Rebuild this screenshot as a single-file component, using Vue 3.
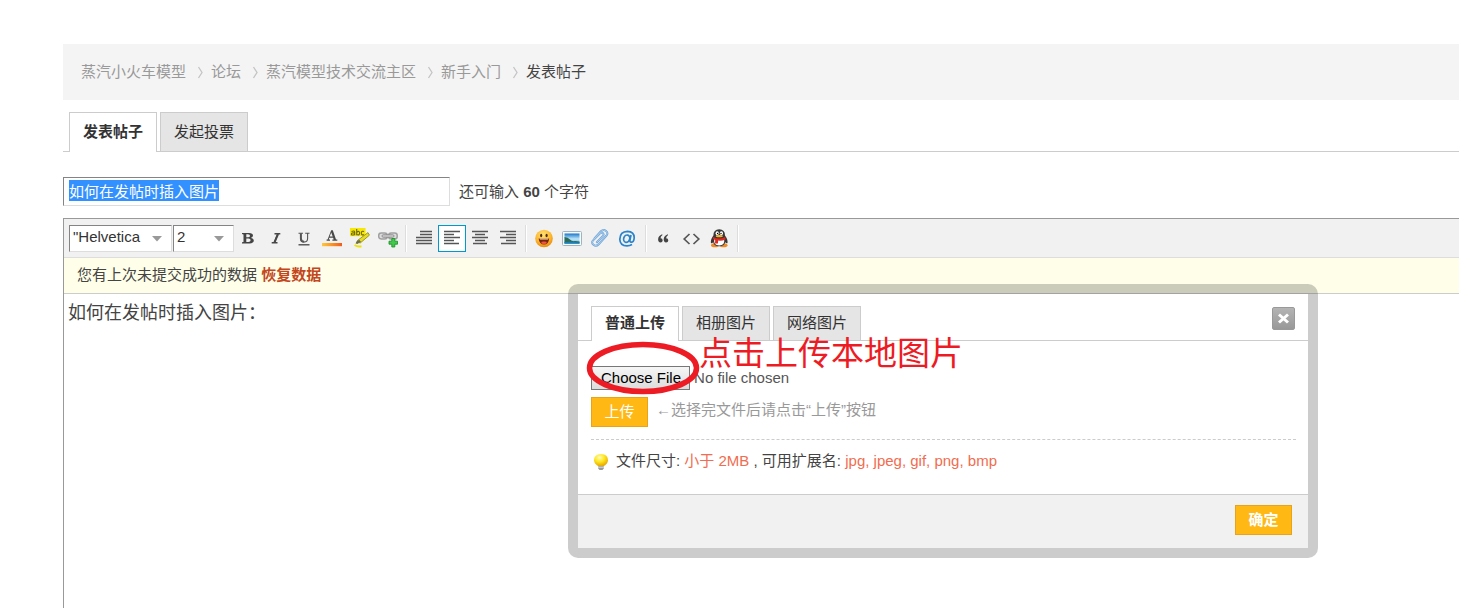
<script setup>
import { ref, onMounted } from 'vue'

const crumbs = ['蒸汽小火车模型', '论坛', '蒸汽模型技术交流主区', '新手入门']
const title = ref('如何在发帖时插入图片')
const body = ref('如何在发帖时插入图片：')
const titleBox = ref(null)
const dialogTabs = ['普通上传', '相册图片', '网络图片']

onMounted(() => {
  titleBox.value.focus()
  titleBox.value.select()
})
</script>

<template>
  <div class="page">
    <nav class="crumbs" aria-label="导航">
      <template v-for="c in crumbs" :key="c">
        <a href="#">{{ c }}</a>
        <svg class="chev" width="25" height="16" viewBox="0 0 25 16" aria-hidden="true">
          <path d="M12.5 3 L16 8.5 L12.5 14" fill="none" stroke="#c4c4c4" stroke-width="1.3" />
        </svg>
      </template>
      <a href="#" class="here">发表帖子</a>
    </nav>

    <div class="tabs">
      <button type="button" class="tab on">发表帖子</button>
      <button type="button" class="tab">发起投票</button>
    </div>

    <div class="title-row">
      <input ref="titleBox" v-model="title" class="title" type="text" aria-label="标题" />
      <span>还可输入 <b>60</b> 个字符</span>
    </div>

    <section class="editor">
      <div class="toolbar">
        <label class="pick font">
          <select aria-label="字体"><option>"Helvetica</option></select>
          <svg width="10" height="6" viewBox="0 0 10 6"><path d="M0 0H10L5 5.5Z" fill="#999" /></svg>
        </label>
        <label class="pick size">
          <select aria-label="字号"><option>2</option></select>
          <svg width="10" height="6" viewBox="0 0 10 6"><path d="M0 0H10L5 5.5Z" fill="#999" /></svg>
        </label>

        <div class="group">
          <button type="button" class="tool" aria-label="粗体">
            <svg viewBox="0 0 20 20"><path d="M4 5H11Q15 5 15 7.6Q15 9.4 12.8 9.9Q15.8 10.4 15.8 12.6Q15.8 15.4 11.6 15.4H4V14.3L5.5 14V6.4L4 6.1ZM8.3 6.3V9.3H10Q12 9.3 12 7.8T10 6.3ZM8.3 10.6V14.1H10.4Q12.6 14.1 12.6 12.3T10.4 10.6Z" fill="#444" fill-rule="evenodd" /></svg>
          </button>
          <button type="button" class="tool" aria-label="斜体">
            <svg viewBox="0 0 20 20"><path d="M8.5 5.7H14.3M5.7 14.8H11.5M12 5.7L8.2 14.8" stroke="#484848" stroke-width="1.4" fill="none" /><path d="M12 6L8.4 14.6" stroke="#484848" stroke-width="2" /></svg>
          </button>
          <button type="button" class="tool" aria-label="下划线">
            <svg viewBox="0 0 20 20"><path d="M4.5 5.2H9M11.2 5.2H15.5M13.6 5.2V10.6Q13.6 14 10.2 14T6.8 10.6" stroke="#555" stroke-width="1.1" fill="none" /><path d="M6.9 5.2V10.5Q6.9 13.8 10.2 13.8" stroke="#555" stroke-width="2" fill="none" /><path d="M4.5 16.8H15.5" stroke="#444" stroke-width="1.3" /></svg>
          </button>
          <button type="button" class="tool" aria-label="文字颜色">
            <svg viewBox="0 0 20 20">
              <defs><linearGradient id="ink"><stop offset="0" stop-color="#ffc83c" /><stop offset=".5" stop-color="#fa9325" /><stop offset="1" stop-color="#f05a1c" /></linearGradient></defs>
              <path d="M9.200 2.200H10.800L14 11.600H15.300V12.700H10.400V11.600H11.700L11.100 9.700H7.300L6.700 11.600H8V12.700H4.600V11.600H5.600ZM9.200 4.400L7.700 8.500H10.700Z" fill="#484848" fill-rule="evenodd" />
              <rect y="15" width="20" height="3.2" fill="url(#ink)" />
            </svg>
          </button>
          <button type="button" class="tool" aria-label="背景色">
            <svg viewBox="0 0 20 20">
              <rect x="0" y="0" width="15.5" height="8.2" fill="#f7e800" />
              <g fill="none" stroke="#6b6420" stroke-width="1.1"><path d="M1.5 3.5Q4.7 2.3 4.7 4V7.3M4.7 5Q1.4 4.6 1.4 6.2T4.7 6.4" /><path d="M6.7 1V7.2M6.7 4.2Q9.6 2.3 9.6 5T6.7 6.6" /><path d="M14 3.6Q11.3 2.5 11.3 5T14 6.7" /></g>
              <path d="M18 4.6L19.4 7.2L10 15.2L7.3 12.6Z" fill="#e6dc22" stroke="#8c8510" stroke-width=".8" />
              <path d="M9.2 11.8L11 13.8L7.4 16L5.6 15.6L6.4 13.4Z" fill="#6f6f45" />
              <path d="M4.600 17Q7.500 19 11.500 18.200" stroke="#eee200" stroke-width="2" fill="none" />
            </svg>
          </button>
          <button type="button" class="tool" aria-label="链接">
            <svg viewBox="0 0 20 20">
              <g fill="none" stroke="#a0a0a0" stroke-width="1.5"><rect x=".7" y="5" width="8.500" height="6" rx="2.500" fill="#ddd" /><rect x="10.700" y="5" width="8.500" height="6" rx="2.500" fill="#ddd" /></g>
              <rect x="4" y="6.700" width="12" height="2.600" rx="1.200" fill="#c8c8c8" stroke="#888" stroke-width=".8" />
              <path d="M13.800 10.500H16.800V13.200H19.500V16.200H16.800V19H13.800V16.200H11V13.200H13.800Z" fill="#42c94b" stroke="#168b25" stroke-width=".8" />
            </svg>
          </button>
        </div>

        <i class="sep"></i>
        <div class="group">
          <button type="button" class="tool" aria-label="自动排版">
            <svg viewBox="0 0 20 20"><path d="M6 3.500H18M6 6.500H18M2 9.500H18M2 12.500H18M2 15.500H18" stroke="#555" stroke-width="1.700" /></svg>
          </button>
          <button type="button" class="tool active" aria-label="居左">
            <svg viewBox="0 0 20 20"><path d="M2 3.500H18M2 6.500H12M2 9.500H18M2 12.500H12M2 15.500H17" stroke="#555" stroke-width="1.700" /></svg>
          </button>
          <button type="button" class="tool" aria-label="居中">
            <svg viewBox="0 0 20 20"><path d="M2 3.500H18M5 6.500H15M2 9.500H18M5 12.500H15M3 15.500H17" stroke="#555" stroke-width="1.700" /></svg>
          </button>
          <button type="button" class="tool" aria-label="居右">
            <svg viewBox="0 0 20 20"><path d="M2 3.500H18M8 6.500H18M2 9.500H18M8 12.500H18M3 15.500H18" stroke="#555" stroke-width="1.700" /></svg>
          </button>
        </div>

        <i class="sep"></i>
        <div class="group">
          <button type="button" class="tool" aria-label="表情">
            <svg viewBox="0 0 20 20">
              <defs><radialGradient id="face" cx=".45" cy=".3" r=".7"><stop offset="0" stop-color="#ffe277" /><stop offset=".65" stop-color="#fcb62c" /><stop offset="1" stop-color="#e88a12" /></radialGradient></defs>
              <circle cx="10" cy="10.500" r="8.800" fill="url(#face)" />
              <ellipse cx="7.200" cy="7.500" rx="1.100" ry="1.700" fill="#4b2a10" /><ellipse cx="12.600" cy="7.500" rx="1.100" ry="1.700" fill="#4b2a10" />
              <path d="M4.600 10.500H15.200Q14.600 16.500 10 16.500T4.600 10.500Z" fill="#7a2410" /><path d="M5.500 10.600H14.400L14 11.600H6Z" fill="#ffe9b0" /><ellipse cx="10" cy="14.700" rx="2.800" ry="1.300" fill="#ef5540" />
            </svg>
          </button>
          <button type="button" class="tool" aria-label="图片">
            <svg viewBox="0 0 20 20">
              <defs><linearGradient id="sky" x2="0" y2="1"><stop offset="0" stop-color="#1976c9" /><stop offset=".55" stop-color="#bfe6fa" /><stop offset="1" stop-color="#5db2e2" /></linearGradient></defs>
              <rect x=".5" y="3.500" width="19" height="14" rx="1" fill="#f7fafc" stroke="#9fb4bf" />
              <rect x="2.500" y="5.500" width="15" height="10" fill="url(#sky)" /><path d="M2.500 9Q6 9.200 8 11.500T13 13.100L17.500 13.500V15.500H2.500Z" fill="#2c6b56" /><path d="M2.500 14.100Q10 13 17.500 14.500V15.500H2.500Z" fill="#1680c5" />
            </svg>
          </button>
          <button type="button" class="tool" aria-label="附件">
            <svg viewBox="0 0 20 20"><g fill="none" stroke-linecap="round"><path d="M4.500 10.500L10.900 3.300Q13.500 .9 16 3T16.500 7.500L8.700 16.300Q6.100 19 3.500 16.800T3.100 12.400L10.100 5.200Q12 4 13.100 5.300T12.900 7.900L6.900 14.200" stroke="#6fa3d6" stroke-width="2" /><path d="M4.500 10.500L10.900 3.300Q13.500 .9 16 3T16.500 7.500L8.700 16.300Q6.100 19 3.500 16.800T3.100 12.400L10.100 5.200Q12 4 13.100 5.300T12.900 7.900L6.900 14.200" stroke="#b6d7f3" stroke-width=".8" /></g></svg>
          </button>
          <button type="button" class="tool" aria-label="@朋友">
            <svg viewBox="0 0 20 20"><g fill="none" stroke="#2a83cb" stroke-width="1.700"><path d="M14 16.500Q11.800 17.800 9 17.800Q2 17.800 1.800 11.200Q2 3.500 9.500 3.300Q16.200 3.500 16.200 9.700Q16 14.100 13.200 14.200Q11.500 14 12 11.800L13 7" /><ellipse cx="8.700" cy="10.700" rx="3" ry="3.700" transform="rotate(18 8.700 10.700)" /></g></svg>
          </button>
        </div>

        <i class="sep"></i>
        <div class="group">
          <button type="button" class="tool" aria-label="引用">
            <svg viewBox="0 0 20 20"><path d="M8.500 7Q6.500 8.200 6.500 10.200Q8.700 10.200 8.700 12.400Q8.500 14.500 6.500 14.500Q4 14.300 4.100 11.200Q4.300 7.900 8.100 6.300ZM14.100 7Q12.100 8.200 12.100 10.200Q14.300 10.200 14.300 12.400Q14.100 14.500 12.100 14.500Q9.600 14.300 9.700 11.200Q9.900 7.900 13.700 6.300Z" fill="#444" /></svg>
          </button>
          <button type="button" class="tool" aria-label="代码">
            <svg viewBox="0 0 20 20"><path d="M7.500 6L2.200 11L7.500 16M11.500 6L16.800 11L11.500 16" fill="none" stroke="#555" stroke-width="1.700" /></svg>
          </button>
          <button type="button" class="tool" aria-label="QQ">
            <svg viewBox="0 0 20 20">
              <ellipse cx="5" cy="17.300" rx="4" ry="2" fill="#f08a24" /><ellipse cx="13.500" cy="17.300" rx="4" ry="2" fill="#f08a24" />
              <path d="M9.200 1.200Q15 1.400 15 7.500Q18 11.500 17.500 14.900Q16.700 15.700 15.200 14.200Q14.400 18.200 9.200 18.200T3.200 14.200Q1.700 15.700 .9 14.900Q.4 11.500 3.400 7.500Q3.400 1.400 9.200 1.200Z" fill="#383838" />
              <path d="M4.200 11H14.200Q15 17.500 9.200 17.500T4.200 11Z" fill="#fff" />
              <ellipse cx="7.200" cy="5.200" rx="1.600" ry="2" fill="#fff" /><ellipse cx="11.400" cy="5.200" rx="1.600" ry="2" fill="#fff" /><circle cx="7.600" cy="5.500" r=".7" /><circle cx="11" cy="5.500" r=".7" />
              <ellipse cx="9.300" cy="8.200" rx="3.500" ry="1.100" fill="#f7b52b" />
              <path d="M3.200 9Q9.200 12 15.200 9L15.500 11.500Q12 13 8.200 12.600L7.900 15.500H5L5.200 12.100L2.900 11Z" fill="#e3281f" />
            </svg>
          </button>
        </div>
        <i class="sep"></i>
      </div>

      <div class="notice">您有上次未提交成功的数据 <a href="#">恢复数据</a></div>
      <textarea v-model="body" class="content" aria-label="内容"></textarea>
    </section>

    <div class="dialog" role="dialog" aria-label="图片">
      <div class="dialog-head">
        <button v-for="(t, i) in dialogTabs" :key="t" type="button" class="tab" :class="{ on: i === 0 }">{{ t }}</button>
        <button type="button" class="close" aria-label="关闭">
          <svg width="23" height="23" viewBox="0 0 23 23"><path d="M7 7.500L16 15.500M16 7.500L7 15.500" stroke="#fff" stroke-width="3" /></svg>
        </button>
      </div>
      <div class="dialog-body">
        <input class="file" type="file" aria-label="选择文件" />
        <div class="upload">
          <button type="button" class="go">上传</button>
          <span>←选择完文件后请点击“上传”按钮</span>
        </div>
        <p class="tip">
          <svg width="16" height="18" viewBox="0 0 16 18" aria-hidden="true">
            <defs><radialGradient id="glow" cx=".4" cy=".3" r=".7"><stop offset="0" stop-color="#fffbc0" /><stop offset=".5" stop-color="#ffe71d" /><stop offset="1" stop-color="#e9a900" /></radialGradient></defs>
            <path d="M8 1Q15 1.300 15 7.300Q14.700 11 11 13H5Q1.300 11 1 7.300Q1 1.300 8 1Z" fill="url(#glow)" />
            <path d="M5.300 13H10.700V15.500L9.500 17H6.500L5.300 15.500Z" fill="#999" /><path d="M5.300 14.200H10.700" stroke="#ddd" />
          </svg>
          <span>文件尺寸: <em>小于 2MB </em>, 可用扩展名: <em>jpg, jpeg, gif, png, bmp</em></span>
        </p>
      </div>
      <div class="dialog-foot">
        <button type="button" class="go strong">确定</button>
      </div>
      <svg class="ring" width="114" height="54" viewBox="0 0 114 54" aria-hidden="true">
        <ellipse cx="57" cy="27" rx="53.500" ry="23.500" fill="none" stroke="#ed1c24" stroke-width="5.500" />
      </svg>
      <div class="callout">点击上传本地图片</div>
    </div>
  </div>
</template>

<style>
body {
  background: #fff;
}
</style>

<style scoped>
* {
  box-sizing: border-box;
}
.page,
.page button,
.page input,
.page select,
.page textarea {
  font-family: "Liberation Sans", "Noto Sans CJK SC", sans-serif;
  font-size: 15px;
}
.page {
  position: relative;
  display: flex;
  flex-direction: column;
  min-height: 100vh;
  padding: 44px 0 0 63px;
  color: #444;
  line-height: 24px;
}
a {
  text-decoration: none;
}
.crumbs {
  display: flex;
  align-items: center;
  padding: 16px 18px;
  background: #f4f4f4;
}
.crumbs a {
  color: #999;
}
.crumbs .here {
  color: #444;
}
.tabs,
.dialog-head {
  display: flex;
  gap: 3px;
  border-bottom: 1px solid #ccc;
}
.tabs {
  margin-top: 12px;
  padding-left: 6px;
}
.tab {
  height: 39px;
  padding: 0 13px 4px;
  border: 1px solid #ccc;
  border-bottom: 0;
  background: #e5e5e5;
  color: #333;
}
.tab.on {
  margin-bottom: -1px;
  height: 40px;
  padding-bottom: 5px;
  background: #fff;
  font-weight: bold;
}
.title-row {
  display: flex;
  align-items: center;
  gap: 9px;
  margin-top: 25px;
}
.title {
  width: 387px;
  height: 29px;
  padding: 0 5px 2px;
  border: 1px solid #ddd;
  border-top-color: #848484;
  border-left-color: #848484;
  color: #444;
  outline: none;
}
.title::selection {
  background: #3390ff;
  color: #fff;
}
.editor {
  display: flex;
  flex: 1;
  flex-direction: column;
  margin-top: 12px;
  border: solid #999;
  border-width: 1px 0 0 1px;
}
.toolbar {
  display: flex;
  align-items: center;
  height: 39px;
  padding-left: 5px;
  border-bottom: 1px solid #ddd;
  background: #f1f1f1;
}
.pick {
  display: flex;
  align-items: center;
  height: 27px;
  padding-right: 9px;
  border: 1px solid #ddd;
  border-top-color: #848484;
  border-left-color: #848484;
  background: #fff;
}
.pick select {
  flex: 1;
  min-width: 0;
  height: 25px;
  padding: 0 0 3px 3px;
  border: 0;
  background: none;
  color: #333;
  appearance: none;
}
.pick svg {
  margin-top: 2px;
}
.font {
  width: 103px;
  margin-right: 1px;
}
.size {
  width: 61px;
}
.group {
  display: flex;
}
.tool {
  display: flex;
  align-items: center;
  justify-content: center;
  width: 28px;
  height: 27px;
  padding: 0;
  border: 0;
  background: none;
}
.tool.active {
  border: 1px solid #09c;
  background: #fff;
}
.tool svg {
  flex: none;
  width: 20px;
  height: 20px;
}
.sep {
  width: 2px;
  height: 27px;
  margin: 0 3px;
  border-left: 1px solid #ddd;
  background: #fff;
}
.notice {
  padding: 5px 13px 6px;
  border-bottom: 1px solid #ccc;
  background: #ffffe9;
}
.notice a {
  color: #c3471d;
  font-weight: bold;
}
.page .content {
  flex: 1;
  padding: 4px;
  border: 0;
  outline: none;
  resize: none;
  color: #444;
  font-size: 18px;
}
.dialog {
  position: absolute;
  top: 284px;
  left: 568px;
  width: 750px;
  border: 10px solid rgba(0, 0, 0, 0.2);
  border-radius: 10px;
  background: #fff;
  background-clip: padding-box;
}
.dialog-head {
  padding: 12px 13px 0;
}
.dialog-head .tab {
  height: 34px;
}
.dialog-head .tab.on {
  height: 35px;
}
.close {
  width: 23px;
  height: 23px;
  margin: 1px 0 0 auto;
  padding: 0;
  border: 1px solid #999;
  border-radius: 2px;
  background: linear-gradient(#b4b4b4, #989898);
}
.close svg {
  display: block;
  margin: -1px;
}
.dialog-body {
  padding: 25px 12px 20px 13px;
}
.file {
  display: block;
  width: 300px;
  height: 24px;
  color: #555;
}
.file::file-selector-button {
  height: 24px;
  padding: 0 8px 2px 9px;
  border: 1px solid #777;
  background: linear-gradient(#f6f6f6, #dcdcdc);
  color: #000;
  font-family: inherit;
  font-size: 15px;
}
.upload {
  display: flex;
  align-items: flex-start;
  gap: 8px;
  padding: 7px 0 12px;
  border-bottom: 1px dashed #ccc;
  color: #999;
}
.upload span {
  padding-top: 1px;
}
.go {
  width: 57px;
  height: 30px;
  padding: 0 0 3px;
  border: 1px solid #e8a317;
  background: #ffb814;
  color: #fff;
}
.strong {
  font-weight: bold;
}
.tip {
  display: flex;
  align-items: flex-start;
  gap: 7px;
  margin: 0;
  padding: 9px 0 1px 2px;
}
.tip svg {
  margin-top: 4px;
}
.tip em {
  color: #f26c4f;
  font-style: normal;
}
.dialog-foot {
  display: flex;
  justify-content: flex-end;
  padding: 10px 16px 13px;
  border-top: 1px solid #ccc;
  background: #f1f1f1;
}
.ring {
  position: absolute;
  top: 47px;
  left: 8px;
}
.callout {
  position: absolute;
  top: 40px;
  left: 121px;
  color: #ed1c24;
  font-size: 33px;
  line-height: 40px;
}
</style>
